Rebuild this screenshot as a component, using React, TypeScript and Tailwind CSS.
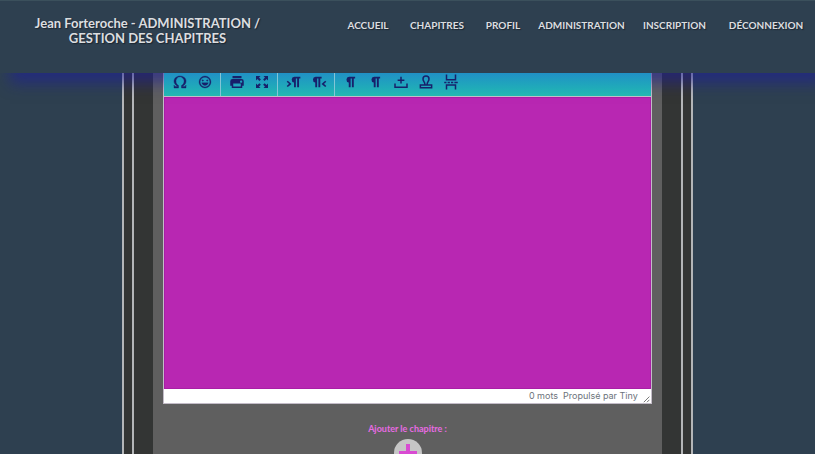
import React from "react";

const links = ["ACCUEIL", "CHAPITRES", "PROFIL", "ADMINISTRATION", "INSCRIPTION", "DÉCONNEXION"];

function Icon({ children }: { children: React.ReactNode }) {
  return (
    <svg viewBox="0 0 24 24" className="size-[18px]" fill="#17206b" aria-hidden="true">
      {children}
    </svg>
  );
}

const pilcrow = "M17.500 5H9.500a3.900 3.900 0 0 0-.5 7.700V19h2.500V7.200h1.700V19h2.500V7.200h1.800z";

const groups: { label: string; icon: React.ReactNode }[][] = [
  [
    {
      label: "Caractère spécial",
      icon: (
        <path
          stroke="#17206b"
          strokeWidth="0.5"
          d="M15 18h4l1-2v4h-6v-3.3l1.4-1a6 6 0 0 0 1.8-2.9 6.3 6.3 0 0 0-.1-4.1 5.8 5.8 0 0 0-3-3.2c-.6-.3-1.3-.5-2.1-.5a5.1 5.1 0 0 0-3.9 1.8 6.3 6.3 0 0 0-1.3 6 6.2 6.2 0 0 0 1.8 3l1.4.9V20H4v-4l1 2h4v-.5l-2-1L5.4 15A6.5 6.5 0 0 1 4 11c0-1 .2-1.900.6-2.700A7 7 0 0 1 6.300 6C7.100 5.400 8 5 9 4.500c1-.3 2-.5 3.100-.5a8.800 8.800 0 0 1 5.700 2 7 7 0 0 1 1.700 2.300 6 6 0 0 1 .2 4.800c-.2.700-.6 1.300-1 1.900a7.600 7.600 0 0 1-3.600 2.500v.5z"
        />
      ),
    },
    {
      label: "Émoticônes",
      icon: (
        <path
          stroke="#17206b"
          strokeWidth="0.4"
          d="M9 11c.6 0 1-.4 1-1s-.4-1-1-1a1 1 0 0 0-1 1c0 .6.4 1 1 1Zm6 0c.6 0 1-.4 1-1s-.4-1-1-1a1 1 0 0 0-1 1c0 .6.4 1 1 1Zm-3 5.500c2.100 0 4-1.500 4.400-3.500H7.600c.5 2 2.300 3.500 4.400 3.500ZM12 4a8 8 0 1 0 0 16 8 8 0 0 0 0-16Zm0 14.500a6.500 6.500 0 1 1 0-13 6.500 6.500 0 0 1 0 13Z"
        />
      ),
    },
  ],
  [
    {
      label: "Imprimer",
      icon: (
        <path d="M18 8H6a3 3 0 0 0-3 3v6h2v3h14v-3h2v-6a3 3 0 0 0-3-3zm-1 10H7v-4h10v4zm.5-5c-.8 0-1.500-.7-1.500-1.500s.7-1.500 1.500-1.500 1.500.7 1.500 1.500-.7 1.500-1.500 1.500zM18 4H6v3h12V4z" />
      ),
    },
    {
      label: "Plein écran",
      icon: (
        <path d="M4 4h6L8 6l2.500 2.500-2 2L6 8l-2 2zM20 4v6l-2-2-2.500 2.500-2-2L16 6l-2-2zM4 20v-6l2 2 2.500-2.500 2 2L8 18l2 2zM20 20h-6l2-2-2.500-2.500 2-2L18 16l2-2z" />
      ),
    },
  ],
  [
    {
      label: "De gauche à droite",
      icon: (
        <>
          <path d={pilcrow} transform="translate(3 0)" />
          <path d="M3 11l4 3.500L3 18" fill="none" stroke="#17206b" strokeWidth="2.200" />
        </>
      ),
    },
    {
      label: "De droite à gauche",
      icon: (
        <>
          <path d={pilcrow} transform="translate(-2 0)" />
          <path d="M21 11l-4 3.500 4 3.500" fill="none" stroke="#17206b" strokeWidth="2.200" />
        </>
      ),
    },
  ],
  [
    { label: "Paragraphe", icon: <path d={pilcrow} /> },
    { label: "Caractères invisibles", icon: <path d={pilcrow} /> },
    {
      label: "Espace insécable",
      icon: (
        <path d="M4 14v5h16v-5M12 5v9M7.500 9.500h9" fill="none" stroke="#17206b" strokeWidth="2" />
      ),
    },
    {
      label: "Ancre",
      icon: (
        <path
          d="M10.500 15c0-3-2.500-4-2.500-7a4 4 0 0 1 8 0c0 3-2.500 4-2.500 7M4.500 19.500h15v-3.500h-15z"
          fill="none"
          stroke="#17206b"
          strokeWidth="2"
        />
      ),
    },
    {
      label: "Saut de page",
      icon: (
        <path
          d="M6 2v7h12V2M6 22v-6h12v6M3 12.500h3m1.500 0h3m1.500 0h3m1.500 0h4.500"
          fill="none"
          stroke="#17206b"
          strokeWidth="2"
        />
      ),
    },
  ],
];

function Header() {
  return (
    <header className="relative z-10 grid h-[73px] shrink-0 grid-cols-[295fr_520fr] border-t border-[#3b505c] bg-[#2e4050] font-bold text-[#dcdee0] shadow-[10px_10px_14px_rgba(28,28,160,0.55)]">
      <h1 className="px-8 pt-[15px] text-center text-[13px] leading-[15px] text-shadow-[1px_1px_1px_#1c2630]">
        Jean Forteroche - ADMINISTRATION /<br />
        GESTION DES CHAPITRES
      </h1>
      <nav className="grid grid-cols-[62fr_76fr_56fr_101fr_85fr_98fr] pt-[17px] pl-[42px] text-[10px] leading-[14px] text-shadow-[1px_1px_1px_#1c2630]">
        {links.map((l) => (
          <a key={l} href="#" className="text-center whitespace-nowrap">
            {l}
          </a>
        ))}
      </nav>
    </header>
  );
}

function Editor() {
  return (
    <div className="border-x border-b border-[#c3bcc8]">
      <div className="relative z-20 flex h-6 border-b border-[#c3bcc8] bg-linear-to-b from-[#2190c5] to-[#23b9b1]">
        {groups.map((g, i) => (
          <div
            key={i}
            className="flex items-start border-r border-[#83c5d6] px-[3px] last:border-r-0"
          >
            {g.map((b) => (
              <button
                key={b.label}
                type="button"
                aria-label={b.label}
                className="flex w-[25px] justify-center"
              >
                <Icon>{b.icon}</Icon>
              </button>
            ))}
          </div>
        ))}
      </div>
      <textarea
        aria-label="Contenu du chapitre"
        className="block h-[292px] w-full resize-none border border-[#a91fa5] bg-[#b827b2] p-2 outline-none"
      />
      <div className="flex h-[14px] items-center justify-end gap-[5px] bg-white font-['Inter',sans-serif] text-[9px] leading-[14px] text-[#6c737b]">
        <span>0 mots</span>
        <a href="#">Propulsé par Tiny</a>
        <svg viewBox="0 0 10 10" className="size-2 self-end" aria-hidden="true">
          <path d="M1 9 8 2M5 9l3-3" stroke="#555" fill="none" />
        </svg>
      </div>
    </div>
  );
}

export default function App() {
  return (
    <div className="flex h-screen flex-col overflow-hidden bg-[#2e4050] font-['Lato',sans-serif]">
      <Header />
      <main className="mx-auto flex w-[70%] grow border-x-2 border-[#b4b6b8] bg-[#333534] px-2">
        <div className="flex grow border-x-2 border-[#b4b6b8] px-[19px]">
          <form className="grow bg-[#5f5f5f] px-[10px]">
            <Editor />
            <div className="flex flex-col items-center pt-[18px]">
              <label htmlFor="add" className="text-[9px] leading-[14px] font-bold text-[#e86be3]">
                Ajouter le chapitre :
              </label>
              <button
                id="add"
                type="button"
                className="mt-[3px] flex size-[28px] items-center justify-center rounded-full bg-[#c6c6c6]"
              >
                <svg viewBox="0 0 20 20" className="size-5" aria-hidden="true">
                  <path d="M10 1v18M1 10h18" stroke="#d84bd2" strokeWidth="4" />
                </svg>
              </button>
            </div>
          </form>
        </div>
      </main>
    </div>
  );
}
